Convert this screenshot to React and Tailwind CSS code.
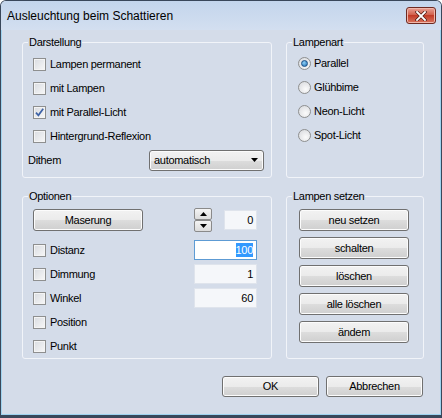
import React from 'react';

const btnFace =
  'border border-[#707070] rounded-[3px] bg-[linear-gradient(#f2f2f2,#ebebeb_50%,#dddddd_50%,#cfcfcf)] shadow-[inset_0_0_0_1px_#fcfcfc] flex items-center justify-center text-black';

const Check = ({ checked }) => (
  <span className="w-[13px] h-[13px] shrink-0 border border-[#8e8f8f] bg-[linear-gradient(135deg,#d9dce1,#f7f7f7)] shadow-[inset_0_0_0_1px_#f4f4f4] flex items-center justify-center">
    {checked && (
      <svg width="11" height="11" viewBox="0 0 11 11">
        <path d="M2 5.6 L4.4 8.3 L9.2 1.8" fill="none" stroke="#3d62a6" strokeWidth="1.7" />
      </svg>
    )}
  </span>
);

const Radio = ({ on }) => (
  <span className="w-[13px] h-[13px] shrink-0 rounded-full border border-[#8e8f8f] bg-[radial-gradient(circle_at_60%_65%,#fbfbfb,#d5d7db)] flex items-center justify-center">
    {on && (
      <span className="w-[7px] h-[7px] rounded-full border border-[#1b4f86] bg-[radial-gradient(circle_at_40%_35%,#8fd1f7,#1d6bb0)]" />
    )}
  </span>
);

const CheckRow = ({ label, checked }) => (
  <div className="h-[24px] flex items-center gap-[4px]">
    <Check checked={checked} />
    <span>{label}</span>
  </div>
);

const Field = ({ value, focused, className = '' }) => (
  <div
    className={`h-[20px] flex items-center justify-end pr-[3px] ${
      focused
        ? 'border border-[#5d9bd4] bg-white'
        : 'border border-[#dfe4ec] bg-[#f5f7fa]'
    } ${className}`}
  >
    {focused ? <span className="bg-[#3399ff] text-white leading-[14px]">{value}</span> : <span>{value}</span>}
  </div>
);

const Group = ({ title, className = '', children }) => (
  <fieldset className={`border border-[#f1f4f9] rounded-[3px] ${className}`}>
    <legend className="ml-[5px] px-[1px] leading-[13px]">{title}</legend>
    {children}
  </fieldset>
);

const SpinArrow = ({ up }) => (
  <svg width="7" height="4" viewBox="0 0 7 4">
    <path d={up ? 'M0 4 L3.5 0 L7 4 Z' : 'M0 0 L3.5 4 L7 0 Z'} fill="#000" />
  </svg>
);

export default function App() {
  return (
    <div className="w-[442px] h-[418px] flex flex-col border border-[#39475a] border-b-[3px] rounded-t-[6px] bg-[#d4dce9] font-['Liberation_Sans',Arial,sans-serif] text-[11px] tracking-[-0.3px] text-black overflow-hidden">
      {/* title bar */}
      <div className="h-[29px] shrink-0 flex items-center justify-between pl-[6px] pr-[5px] bg-[linear-gradient(#c3d5ec,#d3dff0)]">
        <span className="text-[12px] tracking-normal">Ausleuchtung beim Schattieren</span>
        <div className="w-[30px] h-[17px] rounded-[3px] border border-[#6e2a22] bg-[linear-gradient(#e9a195,#cf5a45_50%,#c23b27_50%,#d9755f)] shadow-[inset_0_0_0_1px_#f0b7ab] flex items-center justify-center">
          <svg width="12" height="10" viewBox="0 0 12 10">
            <path d="M2 1 L10 9 M10 1 L2 9" stroke="#4a1a14" strokeWidth="3.2" strokeLinecap="square" />
            <path d="M2 1 L10 9 M10 1 L2 9" stroke="#fff" strokeWidth="1.8" strokeLinecap="square" />
          </svg>
        </div>
      </div>

      {/* client area */}
      <div className="flex-1 flex flex-col pl-[20px] pt-[6px] border-x border-b border-[#9fd3ef]">
        <div className="grid grid-cols-[250px_138px] gap-x-[14px] gap-y-[12px]">
          <Group title="Darstellung" className="h-[142px]">
            <div className="pt-[3px] pl-[10px]">
              <CheckRow label="Lampen permanent" />
              <CheckRow label="mit Lampen" />
              <CheckRow label="mit Parallel-Licht" checked />
              <CheckRow label="Hintergrund-Reflexion" />
            </div>
            <div className="h-[24px] flex items-center justify-between pl-[5px] pr-[7px]">
              <span>Dithem</span>
              <div className="w-[115px] h-[21px] rounded-[3px] border border-[#707070] bg-[linear-gradient(#f2f2f2,#ebebeb_50%,#dddddd_50%,#cfcfcf)] shadow-[inset_0_0_0_1px_#fbfbfb] flex items-center justify-between pl-[4px] pr-[5px]">
                <span>automatisch</span>
                <svg width="7" height="4" viewBox="0 0 7 4">
                  <path d="M0 0 L3.5 4 L7 0 Z" fill="#000" />
                </svg>
              </div>
            </div>
          </Group>

          <Group title="Lampenart" className="h-[142px]">
            <div className="pt-[2px] pl-[11px]">
              {['Parallel', 'Glühbime', 'Neon-Licht', 'Spot-Licht'].map((t, i) => (
                <div key={t} className="h-[24px] flex items-center gap-[3px]">
                  <Radio on={i === 0} />
                  <span>{t}</span>
                </div>
              ))}
            </div>
          </Group>

          <Group title="Optionen" className="h-[169px]">
            <div className="pt-[3px] pl-[10px]">
              <div className="h-[28px] flex items-center">
                <div className={`${btnFace} w-[110px] h-[22px]`}>Maserung</div>
                <div className="ml-[51px] flex flex-col">
                  <div className="w-[18px] h-[12px] border border-[#8a8a8a] rounded-[2px] bg-[linear-gradient(#f4f4f4,#dcdcdc)] flex items-center justify-center">
                    <SpinArrow up />
                  </div>
                  <div className="w-[18px] h-[12px] border border-[#8a8a8a] rounded-[2px] bg-[linear-gradient(#f4f4f4,#dcdcdc)] flex items-center justify-center">
                    <SpinArrow />
                  </div>
                </div>
                <Field value="0" className="ml-[12px] w-[33px]" />
              </div>
              <div className="mt-[4px]">
                {[
                  ['Distanz', '100', true],
                  ['Dimmung', '1'],
                  ['Winkel', '60'],
                  ['Position'],
                  ['Punkt'],
                ].map(([label, value, focused]) => (
                  <div key={label} className="h-[24px] flex items-center justify-between pr-[14px]">
                    <div className="flex items-center gap-[4px]">
                      <Check />
                      <span>{label}</span>
                    </div>
                    {value && <Field value={value} focused={focused} className="w-[63px]" />}
                  </div>
                ))}
              </div>
            </div>
          </Group>

          <Group title="Lampen setzen" className="h-[169px]">
            <div className="pt-[6px] pl-[12px] flex flex-col gap-[6px]">
              {['neu setzen', 'schalten', 'löschen', 'alle löschen', 'ändem'].map((t) => (
                <div key={t} className={`${btnFace} w-[110px] h-[22px]`}>
                  {t}
                </div>
              ))}
            </div>
          </Group>
        </div>

        <div className="mt-[17px] w-[402px] flex justify-end gap-[7px] pr-[1px]">
          <div className={`${btnFace} w-[97px] h-[21px]`}>OK</div>
          <div className={`${btnFace} w-[97px] h-[21px]`}>Abbrechen</div>
        </div>
      </div>
    </div>
  );
}
